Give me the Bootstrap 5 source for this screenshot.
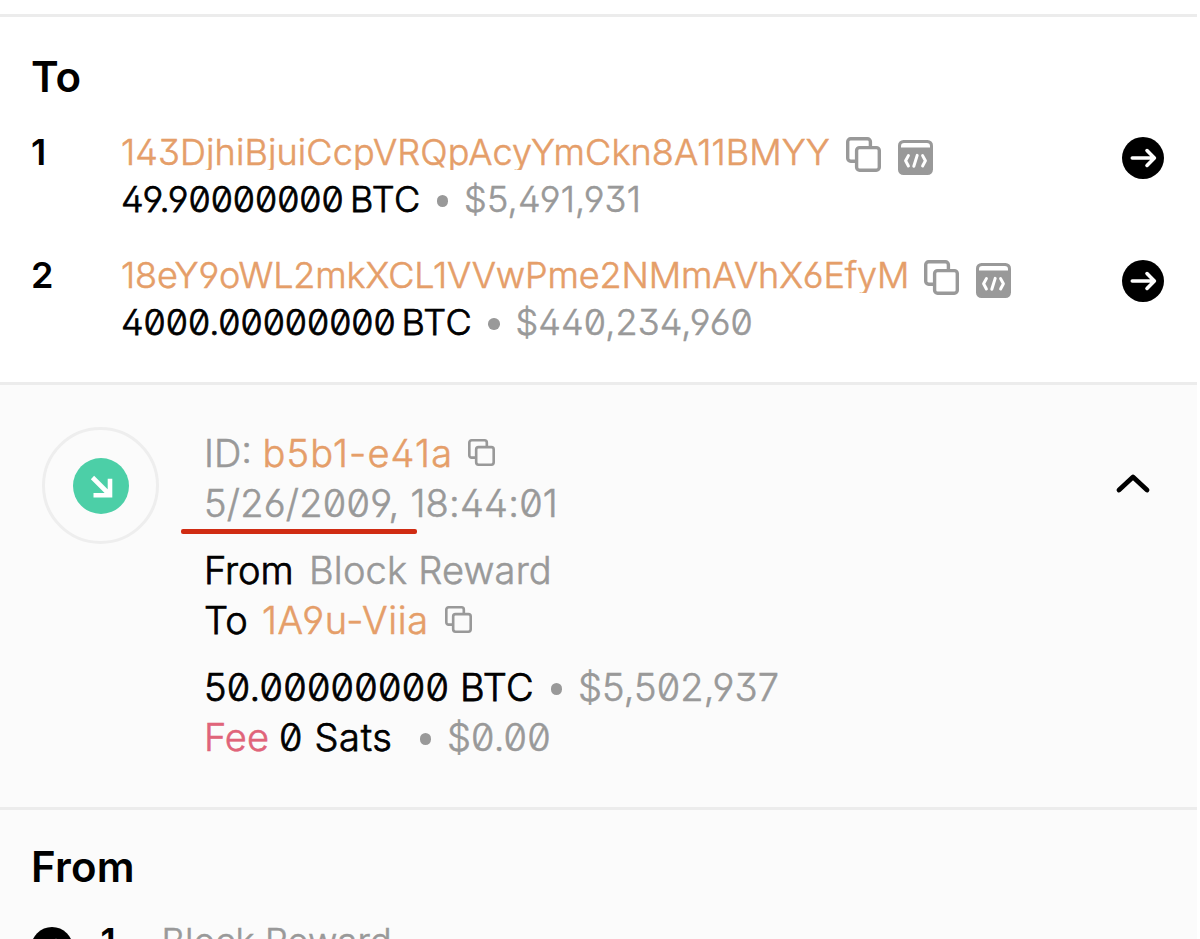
<!DOCTYPE html>
<html lang="en">
<head>
<meta charset="utf-8">
<meta name="viewport" content="width=device-width, initial-scale=1">
<title>Transactions</title>
<link href="https://cdn.jsdelivr.net/npm/bootstrap@5.3.0/dist/css/bootstrap.min.css" rel="stylesheet">
<style>
:root{--line:#ececec;--muted:#999;--orange:#e59e69;--soft:#fbfbfb;--pink:#e0647a}
html,body{height:100%;overflow:hidden}
body{font-family:Inter,"Liberation Sans",sans-serif;font-feature-settings:"zero","ss01";color:#000;background:#fff;font-weight:300}
.page{width:1197px;height:939px;overflow:hidden}
.page svg{flex:none;display:block}
.t{white-space:pre;flex:none;-webkit-text-stroke:.75px currentColor}
.t.gray,.t.orange,.t.pink{-webkit-text-stroke-width:.55px}
.heading{font-size:42px;font-weight:600;line-height:52px;margin:0}
.gray{color:var(--muted)}.orange{color:var(--orange)}.pink{color:var(--pink)}
.topgap{height:14px}
.outputs{height:368px;border-top:3px solid var(--line);padding:34px 33px 0 31px}
.out-row{height:123px;font-size:36px}
.out-row:first-of-type{margin-top:24px}
.num{width:90px;font-weight:600;line-height:50px}
.out-line{height:48px;line-height:48px}
.addr{line-height:38px;height:37px;overflow:hidden;margin-top:6px}
.copy-lg{margin-top:10px}.code-lg{margin:13px 0 0 17.5px}
.dot{width:11.5px;height:11.5px;border-radius:50%;background:var(--muted);flex:none}
.go{margin-top:10px}
.a1{width:724.5px;letter-spacing:.12px}.a2{width:802.5px;letter-spacing:-.12px}
.q1{width:229px;letter-spacing:-.07px}.q2{width:280.5px;letter-spacing:-.07px}
.unit{width:86.5px;letter-spacing:.4px}
.usd{margin-left:16px;letter-spacing:.1px}
.u1{letter-spacing:.22px}
.summary{height:425px;background:var(--soft);border-top:3px solid var(--line);font-size:38px}
.ring{width:117px;height:117px;border:3px solid #eee;border-radius:50%;margin:42px 0 0 42px}
.disc{width:56px;height:56px;border-radius:50%;background:#4ccfa7}
.details{margin:43px 0 0 45px}
.group{margin-bottom:17px}
.ln{height:50px;line-height:50px}
.copy-sm{margin-top:-2px}
.mark-line{position:absolute;left:-23.5px;top:101px;width:236px;height:5px;border-radius:2px;background:#d02c13}
.w-id{width:58.5px}.w-hash{width:205px;letter-spacing:1.15px}.date{letter-spacing:.22px}
.w-from{width:105px}.blk{letter-spacing:.18px}.w-to{width:58px}.w-addr{width:183px;letter-spacing:.6px}
.w-amt{width:346.5px;letter-spacing:.23px}.w-fee{width:75px}.w-sats{width:140.5px;letter-spacing:.65px}
.chev{margin:87px 46px 0 auto}
.inputs{background:var(--soft);border-top:3px solid var(--line);padding:31px 33px 0 31px;height:133px}
.inputs .heading{letter-spacing:.2px}
.in-row{font-size:36px;line-height:49px;height:60px;margin-top:24px}
.in-num{font-weight:600;margin-left:27.5px;width:61px}
.in-row .t.in-num{-webkit-text-stroke-width:0}
</style>
</head>
<body>
<svg width="0" height="0" class="position-absolute" aria-hidden="true">
  <symbol id="copy" viewBox="0 0 35 35"><g fill="none" stroke="#999" stroke-width="3.4"><path d="M10.5 24.2H4.7a3 3 0 0 1-3-3V4.7a3 3 0 0 1 3-3h16.7a3 3 0 0 1 3 3v5.3"/><rect x="10.6" y="10.6" width="22.7" height="22.7" rx="3"/></g></symbol>
  <symbol id="code" viewBox="0 0 35 35"><rect width="35" height="35" rx="5.5" fill="#999"/><path d="M3 7.4V6.2a3.2 3.2 0 0 1 3.2-3.2h22.6a3.2 3.2 0 0 1 3.2 3.2v1.2z" fill="#fff"/><path d="M10.4 15.6 7.6 20.8l2.8 5.2M24.6 15.6l2.8 5.2-2.8 5.2M19.2 15.4l-3.4 10.8" fill="none" stroke="#fff" stroke-width="3" stroke-linecap="round" stroke-linejoin="round"/></symbol>
  <symbol id="go" viewBox="0 0 42 42"><circle cx="21" cy="21" r="21"/><path d="M10.3 21h22M25 13.6l7.4 7.4-7.4 7.4" fill="none" stroke="#fff" stroke-width="3.6" stroke-linecap="round" stroke-linejoin="round"/></symbol>
</svg>
<main class="page">
  <div class="topgap"></div>
  <section class="outputs">
    <h2 class="heading">To</h2>
    <div class="out-row d-flex">
      <div class="num">1</div>
      <div class="flex-grow-1">
        <div class="out-line d-flex"><span class="t addr orange a1">143DjhiBjuiCcpVRQpAcyYmCkn8A11BMYY</span><svg class="copy-lg" width="35" height="35"><use href="#copy"/></svg><svg class="code-lg" width="35" height="35"><use href="#code"/></svg></div>
        <div class="out-line d-flex align-items-center"><span class="t q1">49.90000000</span><span class="t unit">BTC</span><i class="dot mt-1"></i><span class="t gray usd u1">$5,491,931</span></div>
      </div>
      <svg class="go" width="42" height="42"><use href="#go"/></svg>
    </div>
    <div class="out-row d-flex">
      <div class="num">2</div>
      <div class="flex-grow-1">
        <div class="out-line d-flex"><span class="t addr orange a2">18eY9oWL2mkXCL1VVwPme2NMmAVhX6EfyM</span><svg class="copy-lg" width="35" height="35"><use href="#copy"/></svg><svg class="code-lg" width="35" height="35"><use href="#code"/></svg></div>
        <div class="out-line d-flex align-items-center"><span class="t q2">4000.00000000</span><span class="t unit">BTC</span><i class="dot mt-1"></i><span class="t gray usd">$440,234,960</span></div>
      </div>
      <svg class="go" width="42" height="42"><use href="#go"/></svg>
    </div>
  </section>
  <section class="summary d-flex align-items-start">
    <div class="ring d-flex align-items-center justify-content-center"><div class="disc"><svg width="56" height="56" viewBox="0 0 56 56"><path d="M19.5 19.5 37 37M37 20.8v16.4H20.5" fill="none" stroke="#fff" stroke-width="4.6"/></svg></div></div>
    <div class="details">
      <div class="group position-relative">
        <div class="ln d-flex align-items-center"><span class="t gray w-id">ID:</span><span class="t orange w-hash">b5b1-e41a</span><svg class="copy-sm" width="27" height="27"><use href="#copy"/></svg></div>
        <div class="ln t gray date">5/26/2009, 18:44:01</div>
        <div class="mark-line"></div>
      </div>
      <div class="group">
        <div class="ln d-flex align-items-center"><span class="t w-from">From</span><span class="t gray blk">Block Reward</span></div>
        <div class="ln d-flex align-items-center"><span class="t w-to">To</span><span class="t orange w-addr">1A9u-Viia</span><svg class="copy-sm" width="27" height="27"><use href="#copy"/></svg></div>
      </div>
      <div>
        <div class="ln d-flex align-items-center"><span class="t w-amt">50.00000000 BTC</span><i class="dot mt-1"></i><span class="t gray usd">$5,502,937</span></div>
        <div class="ln d-flex align-items-center"><span class="t pink w-fee">Fee</span><span class="t w-sats">0 Sats</span><i class="dot mt-1"></i><span class="t gray usd">$0.00</span></div>
      </div>
    </div>
    <svg class="chev" width="36" height="22" viewBox="0 0 36 22"><path d="M4 18 18 5l14 13" fill="none" stroke="#000" stroke-width="4.8" stroke-linecap="round" stroke-linejoin="round"/></svg>
  </section>
  <section class="inputs">
    <h2 class="heading">From</h2>
    <div class="in-row d-flex"><svg class="go" width="42" height="42"><use href="#go"/></svg><span class="t in-num">1</span><span class="t gray blk">Block Reward</span></div>
  </section>
</main>
<script src="https://cdn.jsdelivr.net/npm/bootstrap@5.3.0/dist/js/bootstrap.bundle.min.js"></script>
</body>
</html>
